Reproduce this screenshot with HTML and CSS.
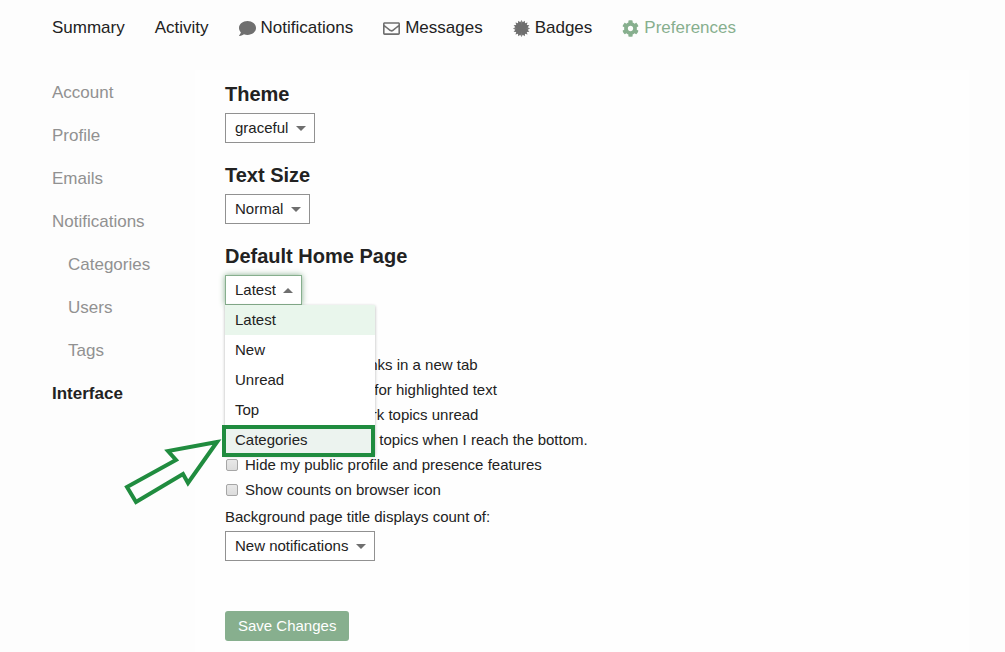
FILE: index.html
```html
<!DOCTYPE html>
<html lang="en">

<head>
    <meta charset="UTF-8">
    <meta name="viewport" content="width=device-width, initial-scale=1.0">
    <title>Preferences - Interface</title>
    <link rel="stylesheet" href="styles.css">
</head>

<body>
    <nav class="main-nav">
        <a href="#">Summary</a>
        <a href="#">Activity</a>
        <a href="#">
            <svg class="icon" viewBox="0 0 512 512" aria-hidden="true"><path d="M256 32C114.6 32 0 125.1 0 240c0 49.6 21.4 95 57 130.7C44.5 421.1 2.7 466 2.2 466.5c-2.2 2.3-2.8 5.7-1.5 8.7S4.8 480 8 480c66.3 0 116-31.8 140.6-51.4 32.7 12.3 69 19.4 107.4 19.4 141.4 0 256-93.1 256-208S397.4 32 256 32z"/></svg>
            Notifications
        </a>
        <a href="#">
            <svg class="icon" viewBox="0 0 512 512" aria-hidden="true"><path d="M464 64H48C21.49 64 0 85.49 0 112v288c0 26.51 21.49 48 48 48h416c26.51 0 48-21.49 48-48V112c0-26.51-21.49-48-48-48zm0 48v40.805c-22.422 18.259-58.168 46.651-134.587 106.49-16.841 13.247-50.201 45.072-73.413 44.701-23.208.375-56.579-31.459-73.413-44.701C106.18 199.465 70.425 171.067 48 152.805V112h416zM48 400V214.398c22.914 18.251 55.409 43.862 104.938 82.646 21.857 17.205 60.134 55.186 103.062 54.955 42.717.231 80.509-37.199 103.053-54.947 49.528-38.783 82.032-64.401 104.947-82.653V400H48z"/></svg>
            Messages
        </a>
        <a href="#">
            <svg class="icon" viewBox="-256 -256 512 512" aria-hidden="true">
                <path id="burst" d="M-20-20L256 0L186 37L237 98L158 106L181 181L106 158L98 237L37 186L0 256Z"/>
                <use href="#burst" transform="rotate(90)"/>
                <use href="#burst" transform="rotate(180)"/>
                <use href="#burst" transform="rotate(270)"/>
            </svg>
            Badges
        </a>
        <a href="#" class="active">
            <svg class="icon" viewBox="0 0 512 512" aria-hidden="true"><path d="M487.4 315.7l-42.6-24.6c4.3-23.2 4.3-47 0-70.2l42.6-24.6c4.9-2.8 7.1-8.6 5.5-14-11.1-35.6-30-67.8-54.7-94.6-3.8-4.1-10-5.1-14.8-2.3L380.8 110c-17.9-15.4-38.5-27.3-60.8-35.1V25.8c0-5.6-3.9-10.5-9.4-11.7-36.7-8.2-74.3-7.8-109.2 0-5.5 1.2-9.4 6.1-9.4 11.7V75c-22.2 7.9-42.8 19.8-60.8 35.1L88.7 85.5c-4.9-2.8-11-1.9-14.8 2.3-24.7 26.7-43.6 58.9-54.7 94.6-1.7 5.4.6 11.2 5.5 14L67.3 221c-4.3 23.2-4.3 47 0 70.2l-42.6 24.6c-4.9 2.8-7.1 8.6-5.5 14 11.1 35.6 30 67.8 54.7 94.6 3.8 4.1 10 5.1 14.8 2.3l42.6-24.6c17.9 15.4 38.5 27.3 60.8 35.1v49.2c0 5.6 3.9 10.5 9.4 11.7 36.7 8.2 74.3 7.8 109.2 0 5.5-1.2 9.4-6.1 9.4-11.7v-49.2c22.2-7.9 42.8-19.8 60.8-35.1l42.6 24.6c4.9 2.8 11 1.9 14.8-2.3 24.7-26.7 43.6-58.9 54.7-94.6 1.5-5.5-.7-11.3-5.6-14.1zM256 336c-44.1 0-80-35.9-80-80s35.9-80 80-80 80 35.9 80 80-35.9 80-80 80z"/></svg>
            Preferences
        </a>
    </nav>

    <div class="page">
        <nav class="side-nav">
            <a href="#">Account</a>
            <a href="#">Profile</a>
            <a href="#">Emails</a>
            <a href="#">Notifications</a>
            <a href="#" class="indent">Categories</a>
            <a href="#" class="indent">Users</a>
            <a href="#" class="indent">Tags</a>
            <a href="#" class="active">Interface</a>
        </nav>

        <form class="preferences">
            <div class="group">
                <label class="heading" for="theme">Theme</label>
                <div class="dropdown">
                    <select id="theme">
                        <option>graceful</option>
                    </select>
                </div>
            </div>

            <div class="group">
                <label class="heading" for="text-size">Text Size</label>
                <div class="dropdown">
                    <select id="text-size">
                        <option>Normal</option>
                    </select>
                </div>
            </div>

            <div class="group">
                <label class="heading" for="home-page">Default Home Page</label>
                <div class="dropdown open">
                    <select id="home-page">
                        <option>Latest</option>
                    </select>
                    <ul class="menu" role="listbox" aria-label="Default Home Page">
                        <li role="option" class="selected" aria-selected="true">Latest</li>
                        <li role="option">New</li>
                        <li role="option">Unread</li>
                        <li role="option">Top</li>
                        <li role="option" class="highlighted">
                            Categories
                            <svg class="arrow" viewBox="0 0 102 70" aria-hidden="true"><path d="M95 6L46 15L54 24L5 51L14 66L61 38L66 47Z"/></svg>
                        </li>
                    </ul>
                </div>
            </div>

            <div class="options">
                <label><input type="checkbox"> Open all external links in a new tab</label>
                <label><input type="checkbox"> Enable quote reply for highlighted text</label>
                <label><input type="checkbox"> Enable defer to mark topics unread</label>
                <label><input type="checkbox"> Automatically unpin topics when I reach the bottom.</label>
                <label><input type="checkbox"> Hide my public profile and presence features</label>
                <label><input type="checkbox"> Show counts on browser icon</label>
            </div>

            <div class="title-count">
                <label for="title-count">Background page title displays count of:</label>
                <div class="dropdown">
                    <select id="title-count">
                        <option>New notifications</option>
                    </select>
                </div>
            </div>

            <button type="button" class="save">Save Changes</button>
        </form>
    </div>
</body>
</html>
```
FILE: styles.css
```css
* {
    box-sizing: border-box;
}

body {
    margin: 0;
    background: #fdfdfd;
    color: #222;
    font: 15px/20px "Liberation Sans", Arial, sans-serif;
}

a {
    color: #222;
    text-decoration: none;
}

/* Top navigation */
.main-nav {
    display: flex;
    gap: 30px;
    padding: 18px 52px 32px;
    font-size: 17px;
}

.main-nav a {
    display: flex;
    align-items: center;
    gap: 5px;
}

.main-nav .active {
    color: #87af8e;
}

.icon {
    width: 17px;
    height: 17px;
    fill: #6f6f6f;
}

.active .icon {
    fill: #87af8e;
}

/* Two column layout */
.page {
    display: flex;
    padding: 0 36px 0 52px;
}

.side-nav {
    display: flex;
    flex-direction: column;
    flex: 0 0 143px;
    gap: 23px;
    padding-top: 13px;
    font-size: 17px;
}

.side-nav a {
    color: #919191;
}

.side-nav .indent {
    padding-left: 16px;
}

.side-nav .active {
    color: #222;
    font-weight: bold;
}

.preferences {
    flex: 1;
    padding: 12px 30px 11px;
    background: #fefefe;
}

.group {
    margin-bottom: 20px;
}

.heading {
    display: block;
    margin-bottom: 7px;
    font-size: 20px;
    font-weight: bold;
    line-height: 24px;
}

/* Drop-downs */
.dropdown {
    position: relative;
    width: fit-content;
}

.dropdown select {
    display: block;
    height: 30px;
    padding: 0 25px 0 9px;
    border: 1px solid #919191;
    border-radius: 0;
    background: #fff;
    color: #222;
    font: inherit;
    appearance: none;
}

.dropdown::after {
    content: "";
    position: absolute;
    top: 13px;
    right: 9px;
    border: 5px solid transparent;
    border-top-color: #6f6f6f;
    border-bottom: 0;
    pointer-events: none;
}

.dropdown.open::after {
    border-top: 0;
    border-bottom: 5px solid #6f6f6f;
}

.open select {
    border-color: #87af8e;
    box-shadow: 0 0 6px #87af8e;
}

.menu {
    position: absolute;
    top: 30px;
    left: 0;
    z-index: 1;
    width: 150px;
    margin: 0;
    padding: 0;
    background: #fff;
    box-shadow: 0 1px 3px rgba(0, 0, 0, 0.3);
    list-style: none;
}

.menu li {
    padding: 5px 10px;
}

.menu .selected {
    background: #e9f6ec;
}

.menu .highlighted {
    position: relative;
    background: #ecf3ef;
}

/* Green frame and arrow over the highlighted row */
.highlighted::after {
    content: "";
    position: absolute;
    inset: 0 0 -2px -3px;
    border: 4px solid #208c3f;
}

.arrow {
    position: absolute;
    top: 11px;
    right: 151px;
    width: 102px;
    height: 70px;
    fill: none;
    stroke: #208c3f;
    stroke-width: 4;
}

/* Checkbox list */
.options {
    padding-top: 27px;
}

.options label {
    display: flex;
    align-items: center;
    gap: 7px;
    height: 25px;
}

.options input {
    width: 12px;
    height: 12px;
    margin: 0 0 0 1px;
    border: 1px solid #a6a6a6;
    border-radius: 2px;
    background: linear-gradient(#e8e8e8, #dcdcdc);
    appearance: none;
}

.options input:checked {
    background: #87af8e;
}

.title-count label {
    display: block;
    margin: 5px 0 4px;
}

.save {
    height: 30px;
    margin-top: 50px;
    padding: 0 13px;
    border: 0;
    border-radius: 3px;
    background: #87af8e;
    color: #fff;
    font: inherit;
}
```
